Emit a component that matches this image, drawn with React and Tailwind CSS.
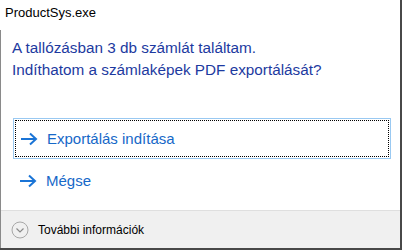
import React from "react";

const Arrow = () => (
  <svg width="18" height="14" viewBox="0 0 18 14" fill="none" className="shrink-0">
    <path d="M1 7h15M10 1.5L16 7l-6 5.5" stroke="#1a74d6" strokeWidth="2" />
  </svg>
);

const ChevronCircle = () => (
  <svg width="18" height="18" viewBox="0 0 18 18" fill="none" className="shrink-0">
    <circle cx="9" cy="9" r="8" stroke="#a8a8a8" strokeWidth="1" />
    <path d="M5.5 7.5L9 11l3.5-3.5" stroke="#8a8a8a" strokeWidth="1.2" />
  </svg>
);

export default function App() {
  return (
    <div
      className="w-[402px] h-[250px] flex flex-col bg-white border-r-2 border-b-2 border-[#484848] overflow-hidden"
      style={{ fontFamily: "'Liberation Sans', Arial, sans-serif" }}
    >
      {/* Title */}
      <div className="h-[30px] pl-[5px] pt-[5px] text-[13px] leading-[16px] text-black">
        ProductSys.exe
      </div>

      {/* Content */}
      <div className="flex-1 flex flex-col border-l border-[#8a8a8a]">
        <div className="pl-[11px] pt-[7px] text-[15.3px] leading-[22px] text-[#1d3aa0]">
          <p>A tallózásban 3 db számlát találtam.</p>
          <p>Indíthatom a számlaképek PDF exportálását?</p>
        </div>

        <div className="mt-[37px] ml-[12px] w-[378px] h-[41px] border border-[#99c9f2] p-[1px]">
          <div className="h-full border border-dotted border-black flex items-center gap-[9px] pl-[4px]">
            <Arrow />
            <span className="text-[15px] leading-[20px] text-[#1668c8]">Exportálás indítása</span>
          </div>
        </div>

        <div className="mt-[11px] ml-[18px] h-[22px] flex items-center gap-[9px]">
          <Arrow />
          <span className="text-[15px] leading-[20px] text-[#1668c8]">Mégse</span>
        </div>

        <div className="mt-auto h-[38px] border-t border-[#dfdfdf] bg-[#f0f0f0] flex items-center gap-[9px] pl-[10px]">
          <ChevronCircle />
          <span className="text-[12px] leading-[16px] text-black">További információk</span>
        </div>
      </div>
    </div>
  );
}
